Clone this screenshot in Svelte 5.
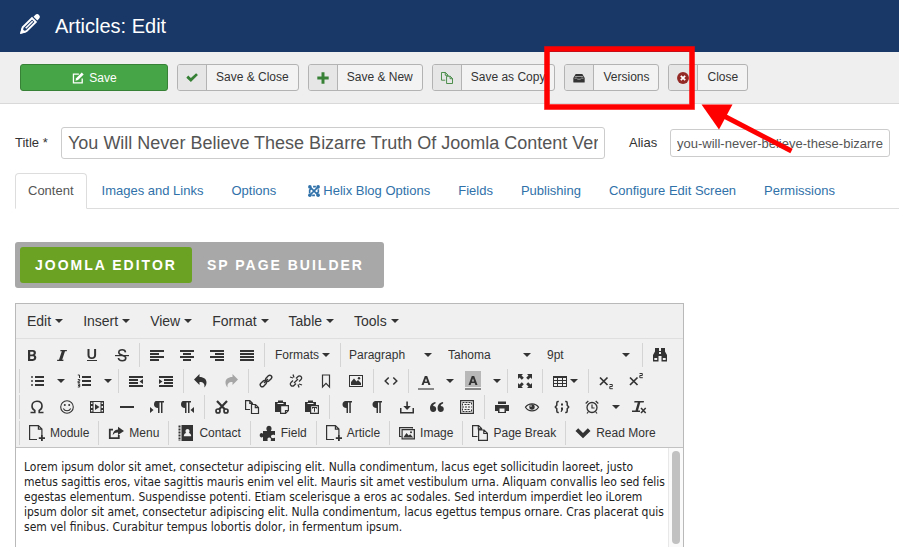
<script lang="ts">
  interface Tool {
    icon?: string;
    label: string;
    text?: string;
    kind?: 'split' | 'menu' | 'list';
    disabled?: boolean;
  }

  // 14 x 14 glyphs for the editor toolbar
  const small: Record<string, string> = {
    bold: '<path fill-rule="evenodd" d="M3 2h4.800c2 0 3.100 1.100 3.100 2.700 0 1.100-.5 1.900-1.300 2.300 1.100.4 1.700 1.400 1.700 2.600 0 2-1.300 3.300-3.500 3.300H3zM5.200 3.800v2.600h2c1 0 1.500-.5 1.500-1.300s-.5-1.300-1.500-1.300zM5.200 8.200v2.900h2.300c1.100 0 1.600-.6 1.600-1.500s-.6-1.400-1.600-1.400z"/>',
    italic: '<path d="M5.500 2H12l-.3 1.200H10L7.200 11.800h1.500L8.200 13H2l.3-1.200H4L6.800 3.200H5.200z"/>',
    underline: '<path d="M2.500 1h2v6c0 1.600.8 2.300 2.300 2.300S9.100 8.600 9.100 7V1h2v6c0 2.700-1.600 4-4.300 4S2.500 9.700 2.500 7zM2 12h10v1H2z"/>',
    strike: '<path d="M0 7h14v1.200H0z"/><path d="M10.500 4.300C10.300 2.700 9.200 1.800 7.200 1.800S3.800 2.700 3.800 4.400c0 3.500 7 2.200 7 5.600 0 1.700-1.500 2.700-3.600 2.700s-3.600-1-3.800-2.700" fill="none" stroke="currentColor" stroke-width="1.600"/>',
    left: '<path d="M0 2h14v2H0zM0 5h9v2H0zM0 8h14v2H0zM0 11h9v2H0z"/>',
    center: '<path d="M0 2h14v2H0zM3 5h8v2H3zM0 8h14v2H0zM3 11h8v2H3z"/>',
    right: '<path d="M0 2h14v2H0zM5 5h9v2H5zM0 8h14v2H0zM5 11h9v2H5z"/>',
    justify: '<path d="M0 2h14v2H0zM0 5h14v2H0zM0 8h14v2H0zM0 11h14v2H0z"/>',
    find: '<path d="M2 0h4v3h2V0h4v3.500l2 3.500v6.500H8.500V8h-3v5.500H0V7l2-3.500zM6 4v2h2V4zM1.300 10v2h2.900v-2zM9.800 10v2h2.900v-2z" fill-rule="evenodd"/>',
    ul: '<path d="M1 2h2v2H1zM1 6h2v2H1zM1 10h2v2H1z" opacity=".7"/><path d="M5 2h9v2H5zM5 6h9v2H5zM5 10h9v2H5z"/>',
    ol: '<path d="M5 2h9v2H5zM5 6h9v2H5zM5 10h9v2H5z"/><path d="M.8 1h1.700v3M.8 5.500h1.900v1.700H1v1.500h2M.8 10h1.900v3H.8M1 11.500h1.700" fill="none" stroke="currentColor"/>',
    outdent: '<path d="M0 2h14v2H0zM0 5h9v2H0zM0 8h9v2H0zM0 11h14v2H0zM14 5v5l-3.500-2.500z"/>',
    indent: '<path d="M0 2h14v2H0zM5 5h9v2H5zM5 8h9v2H5zM0 11h14v2H0zM0 5v5l3.500-2.500z"/>',
    undo: '<path d="M5.500 0v3c4.500 0 7 2.300 7 5.500 0 2-.8 3.600-2.200 5 .7-3.600-.7-5.500-4.800-5.500v3L0 5.500z"/>',
    redo: '<path d="M8.500 0v3c-4.500 0-7 2.300-7 5.500 0 2 .8 3.600 2.200 5C3 9.900 4.400 8 8.500 8v3L14 5.500z"/>',
    link: '<g fill="none" stroke="currentColor" stroke-width="1.400"><rect x="-3.500" y="-2" width="7" height="4" rx="2" transform="translate(9.700 4.300) rotate(-45)"/><rect x="-3.500" y="-2" width="7" height="4" rx="2" transform="translate(4.300 9.700) rotate(-45)"/><path d="M5 9l4-4"/></g>',
    unlink: '<g fill="none" stroke="currentColor" stroke-width="1.300"><path d="M7 4.500l2-2a2 2 0 0 1 3 0 2 2 0 0 1 0 3l-2 2M7 9.500l-2 2a2 2 0 0 1-3 0 2 2 0 0 1 0-3l2-2M1 3l3 1M4 .5l1 3M13 11l-3-1M10 13.500l-1-3M5 9l4-4"/></g>',
    bookmark: '<path d="M3.500 1h7v12L7 9.300 3.500 13z" fill="none" stroke="currentColor" stroke-width="1.200"/>',
    image: '<path fill-rule="evenodd" d="M0 1h14v12H0zM1 2v10h12V2z"/><path d="M2 11V8l3-3.500 2.500 3L9 6l3 3v2z"/><circle cx="10" cy="4.300" r="1.200"/>',
    code: '<path d="M4.700 3.500L1.200 7l3.500 3.500M9.300 3.500L12.800 7l-3.500 3.500" fill="none" stroke="currentColor" stroke-width="1.500"/>',
    fore: '<path fill-rule="evenodd" d="M5.800 2h2.400l3.300 9H9.400l-.7-2H5.300l-.7 2H2.500zM7 4.300L5.900 7.500h2.200z"/><path d="M-1 14h16v2H-1z" fill="#888"/>',
    back: '<path d="M-1-3h16v16H-1z" fill="#b8b8b8"/><path fill-rule="evenodd" d="M5.800 2h2.400l3.300 9H9.400l-.7-2H5.300l-.7 2H2.500zM7 4.300L5.900 7.500h2.200z"/><path d="M-1 14h16v2H-1z" fill="#888"/>',
    full: '<path d="M0 0h5L3.500 1.500l2.300 2.300-2 2-2.300-2.300L0 5zM14 0v5l-1.500-1.500-2.300 2.300-2-2 2.300-2.300L9 0zM0 14V9l1.500 1.500 2.300-2.300 2 2-2.300 2.300L5 14zM14 14H9l1.500-1.500-2.300-2.300 2-2 2.300 2.300L14 9z"/>',
    table: '<path fill-rule="evenodd" d="M0 2h14v11H0zM1 4v2h3V4zM5 4v2h4V4zM10 4v2h3V4zM1 7v2h3V7zM5 7v2h4V7zM10 7v2h3V7zM1 10v2h3v-2zM5 10v2h4v-2zM10 10v2h3v-2z"/>',
    sub: '<path d="M1 3.500l7.500 7.500M8.500 3.500L1 11" fill="none" stroke="currentColor" stroke-width="1.700"/><path d="M10.500 10.500h2.800v2h-2.500v2.200h3" fill="none" stroke="currentColor"/>',
    sup: '<path d="M1 3.500l7.500 7.500M8.500 3.500L1 11" fill="none" stroke="currentColor" stroke-width="1.700"/><path d="M10.500-.5h2.800v2h-2.500v2.200h3" fill="none" stroke="currentColor"/>',
    omega: '<path d="M.5 12.500h4.300v-2C3 9.700 2 8.200 2 6c0-2.800 2-4.800 5-4.800S12 3.200 12 6c0 2.200-1 3.700-2.800 4.500v2h4.300" fill="none" stroke="currentColor" stroke-width="1.600"/>',
    smile: '<circle cx="7" cy="7" r="6.300" fill="none" stroke="currentColor" stroke-width="1.100"/><circle cx="4.800" cy="5" r="1"/><circle cx="9.200" cy="5" r="1"/><path d="M3.300 8.500c1.500 3 6 3 7.400 0" fill="none" stroke="currentColor" stroke-width="1.100"/>',
    media: '<path fill-rule="evenodd" d="M0 1h14v12H0zM1 2.500V4h1.500V2.500zM1 6v2h1.500V6zM1 10v1.500h1.500V10zM11.500 2.500V4H13V2.500zM11.500 6v2H13V6zM11.500 10v1.500H13V10zM3.500 2v10h7V2z"/><path d="M5 4v6l4.500-3z"/>',
    hr: '<path d="M0 6h14v2H0z"/>',
    ltr: '<path d="M6 1h8v1.500h-1.500V13H11V2.500H9.500V13H8V8C5.500 8 4 6.700 4 4.500S5 1 6 1zM0 7v6l3.500-3z"/>',
    rtl: '<path d="M3 1h8v1.500H9.500V13H8V2.500H6.500V13H5V8C2.500 8 1 6.700 1 4.500S2 1 3 1zM14 7v6l-3.500-3z"/>',
    cut: '<g fill="none" stroke="currentColor" stroke-width="1.700"><path d="M2 1l8 8.500M12 1L4 9.500" stroke-width="2.200"/><circle cx="3" cy="11" r="2"/><circle cx="11" cy="11" r="2"/></g>',
    copy: '<path d="M5 9.500H.6V.6h4.200l2.700 2.700v1M4.800.6v2.700h2.700M6.500 4.500h4l3 3v6h-7zM10.300 4.500v3.200h3.200" fill="none" stroke="currentColor" stroke-width="1.200"/>',
    paste: '<path d="M0 2h3V.5h5V2h3v3H6v7H0z"/><path d="M2.500 3.500h6" stroke="#f0f0f0"/><path d="M5.600 5.600h7.800v5l-2.800 2.800h-5zM10.500 13v-2.500H13" fill="#f0f0f0" stroke="currentColor" stroke-width="1.200"/>',
    pastetext: '<path d="M0 2h3V.5h5V2h3v3H6v7H0z"/><path d="M2.500 3.500h6" stroke="#f0f0f0"/><path d="M5.600 5.600h7.800v7.800H5.600z" fill="#f0f0f0" stroke="currentColor" stroke-width="1.200"/><path d="M7 7h5v1.800h-.8V8H10v3.800h-1V8H7.800v.8H7z"/>',
    pilcrow: '<path d="M5.500 1H12v1.500h-1.200V13H9.300V2.500H8V13H6.500V8C4 8 2.500 6.700 2.500 4.500S4 1 5.500 1z"/>',
    nbsp: '<path d="M0 8h1.500v4h11V8H14v5.500H0zM6.300 1.500h1.600V6h3L7.100 10 3.300 6h3z"/>',
    quote: '<path d="M3.200 6C5 6 6.200 7.200 6.200 9s-1.300 3-3 3C1.300 12 0 10.500 0 8.200 0 5 2 2.500 5.500 2v1.500C3.900 4 3.200 4.800 3.200 6zM10.700 6c1.800 0 3.100 1.200 3.100 3s-1.300 3-3.100 3C8.900 12 7.600 10.500 7.600 8.200c0-3.200 2-5.700 5.500-6.200v1.500c-1.600.5-2.400 1.300-2.400 2.500z"/>',
    template: '<path d="M.6.600h12.800v12.800H.6z" fill="none" stroke="currentColor" stroke-width="1.200"/><path d="M2.500 5.500v-3h9v3M2.500 8.500v3h9v-3M2 7h10M4.500 4.500h5M4.500 9.500h5" fill="none" stroke="currentColor" stroke-dasharray="2 1"/>',
    print: '<path fill-rule="evenodd" d="M3 1.500h8V4H3zM0 5h14v6h-3v2H3v-2H0zM4.500 8.500v3.500h5V8.500z"/>',
    eye: '<path d="M.5 7.200C3.500 2.800 10.500 2.800 13.500 7.200 10.500 12 3.500 12 .5 7.200z" fill="none" stroke="currentColor" stroke-width="1.200"/><circle cx="7" cy="7" r="2.700"/><circle cx="6" cy="6" r=".8" fill="#f0f0f0"/>',
    sample: '<path d="M3.800 1.500H3Q1.800 1.500 1.800 3v2.200L.3 7l1.500 1.800V11q0 1.500 1.200 1.500h.8M10.200 1.500h.8q1.200 0 1.200 1.500v2.200L13.700 7l-1.500 1.800V11q0 1.500-1.200 1.500h-.8" fill="none" stroke="currentColor" stroke-width="1.500"/><path d="M6 3.500h2v2H6zM6 7.500h2v2.200L6.500 12H5.600L6.300 9.500H6z"/>',
    clock: '<circle cx="7" cy="7.500" r="5" fill="none" stroke="currentColor" stroke-width="1.300"/><path d="M7 4.500v3.500h2.500M.7 3.500L3.300 1M13.300 3.500L10.700 1M3.500 11.500L2 13.500M10.500 11.500l1.500 2" fill="none" stroke="currentColor" stroke-width="1.200"/>',
    clear: '<path d="M2.500 1H12l-.3 1.500H8.300L6 10.500h2V12H0v-1.500h3.500L5.800 2.500H2.200z"/><path d="M9 8l4.700 5M13.700 8L9 13" fill="none" stroke="currentColor" stroke-width="1.500"/>'
  };

  // 16 x 16 glyphs for the page toolbar and the insert buttons
  const large: Record<string, string> = {
    edit: '<path d="M9 3.500H2.800v10h10V8.500" fill="none" stroke="currentColor" stroke-width="1.500"/><path d="M12.300 1.800l2.200 2.200-6.500 6.300-2.900.8.800-2.800z"/>',
    check: '<path d="M1.500 7.600l2.200-2.400 3 2.900 6-5.600 2.100 2.200-8.100 7.900z"/>',
    plus: '<path d="M6.300 1.500h3.400v4.800h4.800v3.400H9.700v4.800H6.300V9.700H1.500V6.300h4.800z"/>',
    pages: '<path d="M6 10.500H1.700V1.700h4.500l3 3v1M6 1.700v3.200h3M7.500 6h4.200l2.600 2.600v5.700H7.500zM11.500 6v2.800h2.800" fill="none" stroke="currentColor"/>',
    drawer: '<path d="M4.200 3.500h7.600l2.700 4.500v4.500q0 .7-.7.7H2.200q-.7 0-.7-.7V8z"/><path d="M3.500 6.300h9M2.800 8.200h2.400c.5 1.700 5.100 1.700 5.600 0h2.400" fill="none" stroke="#bbb" stroke-width=".9"/>',
    cancel: '<circle cx="8" cy="8" r="6.800"/><path d="M5.500 5.500l5 5M10.500 5.500l-5 5" stroke="#fff" stroke-width="2"/>',
    module: '<path d="M8 14.500H.6V.6h8.800l3.500 3.500v6M9.400.6v3.600h3.500" fill="none" stroke="currentColor" stroke-width="1.200"/><path d="M12 10h1.800v2.200H16V14h-2.200v2H12v-2H9.800v-1.800H12z"/>',
    share: '<path d="M5 4.700H1.800v8.500h9V10" fill="none" stroke="currentColor" stroke-width="1.800"/><path d="M10 1.800L16 6l-6 4V7.500c-2.500 0-4 .6-5.300 2.700C4.900 6.500 6.500 4.700 10 4.400z"/>',
    contact: '<path fill-rule="evenodd" d="M3.500 0H15v16H3.500zM5.800 11.300h7.400c0-2-1-2.900-2.500-3.200 1.300-1 1.200-4.100-1.200-4.100S7.100 7.100 8.300 8.100c-1.500.3-2.500 1.200-2.500 3.200z"/><path d="M1.500.5v15.500" stroke="currentColor" stroke-width="2" stroke-dasharray="2 1"/>',
    puzzle: '<path d="M3 6h4.200C5.500 3.500 6.700.7 9 .7s3.500 2.800 1.800 5.300H15v4.200c-2.800-1.300-4 .1-4 1.300s1.300 2.300 4 1.200V16h-4.300c.8-2.400-.2-3.500-1.500-3.500S7 13.600 7.700 16H3v-4.200c-1.200 1.200-3.300.6-3.300-1.500S1.800 7.300 3 8.700z"/>',
    picture: '<path d="M2.500 11.500H.6V2.600h12.800v1" fill="none" stroke="currentColor" stroke-width="1.200"/><path fill-rule="evenodd" d="M2.500 4H16v10.500H2.500zM3.700 5.200v8h11v-8z"/><path d="M4.300 12.500L7.500 8l2.200 2.500 1.500-1.200 3 3.200z"/><circle cx="12" cy="7.200" r="1"/>',
    pagebreak: '<path d="M5.500 11.500H.6V.6h6l3 3v1.200M6.300.6v3.300h3.300M6.600 5h5.500l3.300 3.300v7H6.600zM11.800 5v3.500h3.500" fill="none" stroke="currentColor" stroke-width="1.200"/>',
    down: '<path d="M.5 6l2.700-2.700L8 8l4.800-4.700L15.500 6 8 13.300z"/>',
    joomla: '<g fill="none" stroke="currentColor" stroke-width="2.200"><path d="M2.200 10.500V6.800L5 4M13.800 5.500v3.700L11 12M10.500 2.200H6.800M5.500 13.800h3.700M3.500 12.500l9-9M3.500 3.500l9 9"/></g><circle cx="2.500" cy="2.500" r="2.400"/><circle cx="13.500" cy="2.500" r="2.400"/><circle cx="2.500" cy="13.500" r="2.400"/><circle cx="13.500" cy="13.500" r="2.400"/>'
  };

  const actions = [
    { icon: 'check', text: 'Save & Close', tone: 'green' },
    { icon: 'plus', text: 'Save & New', tone: 'green' },
    { icon: 'pages', text: 'Save as Copy', tone: 'green' },
    { icon: 'drawer', text: 'Versions', tone: 'dark' },
    { icon: 'cancel', text: 'Close', tone: 'red' }
  ];

  const tabs = [
    'Content', 'Images and Links', 'Options', 'Helix Blog Options',
    'Fields', 'Publishing', 'Configure Edit Screen', 'Permissions'
  ];

  const menus = ['Edit', 'Insert', 'View', 'Format', 'Table', 'Tools'];

  const rows: Tool[][][] = [
    [
      [
        { icon: 'bold', label: 'Bold' },
        { icon: 'italic', label: 'Italic' },
        { icon: 'underline', label: 'Underline' },
        { icon: 'strike', label: 'Strikethrough' }
      ],
      [
        { icon: 'left', label: 'Align left' },
        { icon: 'center', label: 'Align center' },
        { icon: 'right', label: 'Align right' },
        { icon: 'justify', label: 'Justify' }
      ],
      [{ label: 'Formats', text: 'Formats', kind: 'menu' }],
      [
        { label: 'Block format', text: 'Paragraph', kind: 'list' },
        { label: 'Font family', text: 'Tahoma', kind: 'list' },
        { label: 'Font size', text: '9pt', kind: 'list' }
      ],
      [{ icon: 'find', label: 'Find and replace' }]
    ],
    [
      [
        { icon: 'ul', label: 'Bullet list', kind: 'split' },
        { icon: 'ol', label: 'Numbered list', kind: 'split' }
      ],
      [
        { icon: 'outdent', label: 'Decrease indent' },
        { icon: 'indent', label: 'Increase indent' }
      ],
      [
        { icon: 'undo', label: 'Undo' },
        { icon: 'redo', label: 'Redo', disabled: true }
      ],
      [
        { icon: 'link', label: 'Insert link' },
        { icon: 'unlink', label: 'Remove link' },
        { icon: 'bookmark', label: 'Anchor' },
        { icon: 'image', label: 'Insert image' }
      ],
      [{ icon: 'code', label: 'Source code' }],
      [
        { icon: 'fore', label: 'Text color', kind: 'split' },
        { icon: 'back', label: 'Background color', kind: 'split' }
      ],
      [{ icon: 'full', label: 'Fullscreen' }],
      [{ icon: 'table', label: 'Table', kind: 'menu' }],
      [
        { icon: 'sub', label: 'Subscript' },
        { icon: 'sup', label: 'Superscript' }
      ]
    ],
    [
      [
        { icon: 'omega', label: 'Special character' },
        { icon: 'smile', label: 'Emoticons' },
        { icon: 'media', label: 'Insert video' },
        { icon: 'hr', label: 'Horizontal line' },
        { icon: 'ltr', label: 'Left to right' },
        { icon: 'rtl', label: 'Right to left' }
      ],
      [
        { icon: 'cut', label: 'Cut' },
        { icon: 'copy', label: 'Copy' },
        { icon: 'paste', label: 'Paste' },
        { icon: 'pastetext', label: 'Paste as text' }
      ],
      [
        { icon: 'pilcrow', label: 'Show invisible characters' },
        { icon: 'pilcrow', label: 'Show blocks' },
        { icon: 'nbsp', label: 'Nonbreaking space' },
        { icon: 'quote', label: 'Blockquote' },
        { icon: 'template', label: 'Insert template' }
      ],
      [
        { icon: 'print', label: 'Print' },
        { icon: 'eye', label: 'Preview' },
        { icon: 'sample', label: 'Insert code sample' },
        { icon: 'clock', label: 'Insert date/time', kind: 'split' },
        { icon: 'clear', label: 'Clear formatting' }
      ]
    ]
  ];

  const inserts = [
    { icon: 'module', text: 'Module' },
    { icon: 'share', text: 'Menu' },
    { icon: 'contact', text: 'Contact' },
    { icon: 'puzzle', text: 'Field' },
    { icon: 'module', text: 'Article' },
    { icon: 'picture', text: 'Image' },
    { icon: 'pagebreak', text: 'Page Break' },
    { icon: 'down', text: 'Read More' }
  ];

  let activeTab = $state('Content');
  let mode = $state('Joomla Editor');
  let title = $state('You Will Never Believe These Bizarre Truth Of Joomla Content Versioning');
  let alias = $state('you-will-never-believe-these-bizarre-truth-of-joomla-content-versioning');
</script>

{#snippet glyph(name: string)}
  <svg class="glyph" viewBox="0 0 14 14" width="14" height="14" aria-hidden="true">{@html small[name]}</svg>
{/snippet}

{#snippet symbol(name: string, size: number)}
  <svg class="glyph" viewBox="0 0 16 16" width={size} height={size} aria-hidden="true">{@html large[name]}</svg>
{/snippet}

<div class="page">
  <header class="header">
    <svg viewBox="0 0 20 20" width="20" height="20" aria-hidden="true">
      <path d="M1.500 18.500l1.200-5.200 9.300-9.100 3.800 3.800-9.300 9.200z" fill="none" stroke="#fff" stroke-width="1.900" />
      <path d="M5.700 14.200l7-6.900" stroke="#fff" stroke-width="1.600" />
      <path d="M0 20l1.500-6 4.500 4.500zM13.500 2.700l1.700-1.700c1.200-1.200 2.700-1.200 3.800-.1s1.200 2.600 0 3.800l-1.700 1.700z" fill="#fff" />
    </svg>
    <h1>Articles: Edit</h1>
  </header>

  <div class="actions">
    <button class="save">{@render symbol('edit', 14)}Save</button>
    {#each actions as action}
      <button class="action">
        <span class="action-icon {action.tone}">{@render symbol(action.icon, 14)}</span>
        <span class="action-text">{action.text}</span>
      </button>
    {/each}
  </div>

  <main>
    <div class="fields">
      <label for="title">Title *</label>
      <input id="title" class="title-input" type="text" bind:value={title} />
      <label for="alias" class="alias-label">Alias</label>
      <input id="alias" class="alias-input" type="text" bind:value={alias} />
    </div>

    <nav class="tabs">
      {#each tabs as tab}
        <a href="#{tab}" class:active={activeTab === tab} onclick={() => (activeTab = tab)}>
          {#if tab.startsWith('Helix')}<span class="tab-icon">{@render symbol('joomla', 12)}</span>{/if}{tab}
        </a>
      {/each}
    </nav>

    <div class="switch">
      {#each ['Joomla Editor', 'SP Page Builder'] as name}
        <button class:active={mode === name} onclick={() => (mode = name)}>{name}</button>
      {/each}
    </div>

    <div class="editor">
      <div class="menubar">
        {#each menus as menu}
          <button>{menu}<span class="caret"></span></button>
        {/each}
      </div>

      <div class="toolbar">
        {#each rows as row}
          <div class="row">
            {#each row as group}
              <div class="group">
                {#each group as tool}
                  {#if tool.kind === 'list'}
                    <div class="list">
                      <select aria-label={tool.label}>
                        <option>{tool.text}</option>
                      </select>
                      <span class="caret"></span>
                    </div>
                  {:else}
                    <button class="tool" aria-label={tool.label} disabled={tool.disabled}>
                      {#if tool.icon}{@render glyph(tool.icon)}{/if}{tool.text ?? ''}
                      {#if tool.kind === 'menu'}<span class="caret"></span>{/if}
                    </button>
                    {#if tool.kind === 'split'}
                      <button class="open" aria-label="{tool.label} options"><span class="caret"></span></button>
                    {/if}
                  {/if}
                {/each}
              </div>
            {/each}
          </div>
        {/each}
        <div class="row">
          {#each inserts as insert}
            <div class="group">
              <button class="insert">{@render symbol(insert.icon, 16)}{insert.text}</button>
            </div>
          {/each}
        </div>
      </div>

      <div class="body">
        <div class="text" role="textbox" aria-label="Article text" aria-multiline="true" tabindex="0" contenteditable="true" spellcheck="false">
          Lorem ipsum dolor sit amet, consectetur adipiscing elit. Nulla condimentum, lacus eget sollicitudin laoreet, justo<br />
          metus sagittis eros, vitae sagittis mauris enim vel elit. Mauris sit amet vestibulum urna. Aliquam convallis leo sed felis<br />
          egestas elementum. Suspendisse potenti. Etiam scelerisque a eros ac sodales. Sed interdum imperdiet leo iLorem<br />
          ipsum dolor sit amet, consectetur adipiscing elit. Nulla condimentum, lacus egettus tempus ornare. Cras placerat quis<br />
          sem vel finibus. Curabitur tempus lobortis dolor, in fermentum ipsum.
        </div>
        <div class="track"><div class="thumb"></div></div>
      </div>
    </div>
  </main>

  <svg class="callout" viewBox="0 0 260 120" width="260" height="120" aria-hidden="true">
    <rect x="7" y="9" width="145" height="58" fill="none" stroke="#f00" stroke-opacity=".5" stroke-width="6" />
    <rect x="7" y="9" width="145" height="58" fill="none" stroke="#f00" stroke-width="5" />
    <path d="M161.500 64.500h31l-13.500 25z" fill="#f00" />
    <path d="M184 76l67.500 35" stroke="#f00" stroke-width="5" />
  </svg>
</div>

<style>
  :global(body) {
    margin: 0;
    background: #fff;
  }
  .page {
    position: relative;
    display: flex;
    flex-direction: column;
    height: 100vh;
    overflow: hidden;
    color: #333;
    font-family: "Helvetica Neue", Helvetica, "Liberation Sans", Arial, sans-serif;
    font-size: 13px;
    line-height: 18px;
  }
  button,
  input,
  select {
    font-family: inherit;
    color: inherit;
    margin: 0;
    box-sizing: border-box;
  }
  button {
    display: flex;
    align-items: center;
    border: none;
    background: none;
    padding: 0;
    cursor: pointer;
    white-space: nowrap;
  }
  .glyph {
    flex: none;
    fill: currentColor;
    overflow: visible;
  }
  .caret {
    flex: none;
    border: 4px solid transparent;
    border-top-color: #333;
    border-bottom: none;
  }

  .header {
    display: flex;
    align-items: center;
    gap: 15px;
    flex: none;
    height: 52px;
    padding: 0 20px;
    box-sizing: border-box;
    background: #1a3867;
  }
  .header svg {
    margin-bottom: 4px;
  }
  h1 {
    margin: 0;
    color: #fff;
    font-size: 20px;
    font-weight: normal;
    line-height: 24px;
  }

  .actions {
    display: flex;
    gap: 9px;
    flex: none;
    padding: 12px 20px;
    background: #efefef;
    border-bottom: 1px solid #d9d9d9;
  }
  .save,
  .action {
    height: 27px;
    border-radius: 3px;
    font-size: 12px;
  }
  .save {
    justify-content: center;
    gap: 4px;
    width: 148px;
    background: #46a546;
    border: 1px solid #378137;
    color: #fff;
  }
  .action {
    align-items: stretch;
    background: #f3f3f3;
    border: 1px solid #b3b3b3;
    overflow: hidden;
  }
  .action-icon {
    display: flex;
    align-items: center;
    justify-content: center;
    width: 28px;
    background: #e6e6e6;
    border-right: 1px solid #b3b3b3;
  }
  .action-text {
    padding: 0 9px;
    line-height: 25px;
  }
  .green {
    color: #378137;
  }
  .red {
    color: #942a25;
  }
  .dark {
    color: #333;
  }

  main {
    display: flex;
    flex-direction: column;
    flex: 1;
    padding: 23px 0 0 15px;
  }
  .fields {
    display: flex;
    align-items: center;
    padding-right: 9px;
  }
  .fields label {
    width: 46px;
    flex: none;
  }
  .fields .alias-label {
    width: 41px;
    margin-left: 24px;
  }
  .fields input {
    min-width: 0;
    border: 1px solid #ccc;
    border-radius: 3px;
    padding: 0 6px;
    color: #555;
    background: #fff;
  }
  .title-input {
    flex: 1;
    height: 32px;
    font-size: 18px;
  }
  .alias-input {
    width: 220px;
    height: 28px;
    font-size: 13px;
  }

  .tabs {
    display: flex;
    gap: 2px;
    margin-top: 14px;
    border-bottom: 1px solid #ddd;
  }
  .tabs a {
    display: flex;
    align-items: center;
    padding: 8px 12px;
    margin-bottom: -1px;
    border: 1px solid transparent;
    border-radius: 4px 4px 0 0;
    color: #3071a9;
    text-decoration: none;
    white-space: nowrap;
  }
  .tabs a.active {
    color: #555;
    background: #fff;
    border-color: #ddd;
    border-bottom-color: #fff;
  }
  .tab-icon {
    display: flex;
    justify-content: center;
    width: 19px;
  }

  .switch {
    display: flex;
    align-self: flex-start;
    margin-top: 33px;
    padding: 5px;
    background: #a8a8a8;
    border-radius: 3px;
  }
  .switch button {
    height: 36px;
    padding: 0 15px;
    border-radius: 3px;
    color: #fff;
    font-size: 14px;
    font-weight: bold;
    letter-spacing: 2px;
    text-transform: uppercase;
  }
  .switch .active {
    background: #6ba224;
  }

  .editor {
    display: flex;
    flex-direction: column;
    flex: 1;
    width: 669px;
    margin-top: 15px;
    box-sizing: border-box;
    border: 1px solid #b9b9b9;
    border-bottom: none;
  }
  .menubar {
    display: flex;
    padding: 0 1px;
    background: #f0f0f0;
    border-bottom: 1px solid #dfdfdf;
  }
  .menubar button {
    gap: 4px;
    height: 34px;
    padding: 0 10px;
    font-size: 14px;
  }
  .toolbar {
    padding: 3px 1px 1px;
    background: #f0f0f0;
    border-bottom: 1px solid #c2c2c2;
  }
  .row {
    display: flex;
    align-items: center;
    height: 26px;
  }
  .group {
    display: flex;
    height: 24px;
    margin-left: 2px;
    padding-left: 2px;
    border-left: 1px solid #d4d4d4;
  }
  .row:first-child .group:first-child {
    margin-left: 0;
    padding-left: 0;
    border-left: none;
  }
  .tool {
    gap: 3px;
    padding: 0 8px;
    font-size: 12px;
  }
  .tool:disabled {
    color: #a6a6a6;
  }
  .open {
    justify-content: center;
    width: 17px;
  }
  .list {
    position: relative;
    width: 99px;
  }
  .list select {
    width: 100%;
    height: 24px;
    padding: 0 24px 0 6px;
    border: none;
    background: none;
    appearance: none;
    font-size: 12px;
  }
  .list .caret {
    position: absolute;
    top: 10px;
    right: 10px;
    pointer-events: none;
  }
  .insert {
    gap: 5px;
    padding: 0 7px;
    font-size: 12px;
  }

  .body {
    display: flex;
    flex: 1;
    background: #fff;
  }
  .text {
    flex: 1;
    min-width: 0;
    padding: 12px 8px;
    color: #222;
    font-family: Tahoma, "DejaVu Sans Condensed", sans-serif;
    font-size: 12px;
    line-height: 15px;
    white-space: nowrap;
    outline: none;
  }
  .track {
    display: flex;
    flex: none;
    width: 15px;
    padding: 3px;
    box-sizing: border-box;
    background: #fafafa;
    border-left: 1px solid #e8e8e8;
  }
  .thumb {
    width: 8px;
    border-radius: 4px;
    background: #c1c1c1;
  }

  .callout {
    position: absolute;
    top: 40px;
    left: 540px;
    pointer-events: none;
  }
</style>
